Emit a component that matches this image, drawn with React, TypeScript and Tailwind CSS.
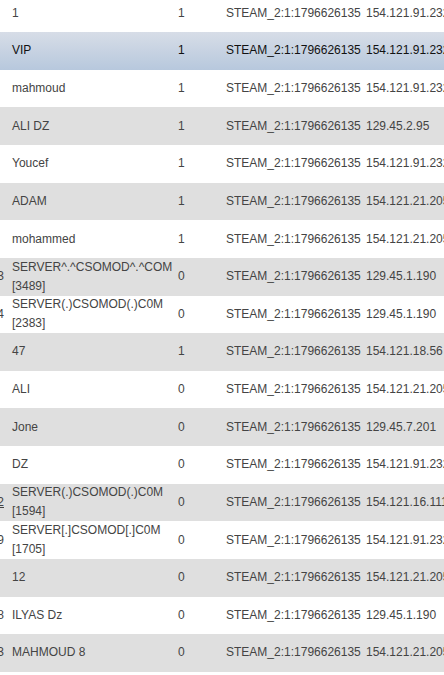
import React from "react";

type Row = { id: string; name: string[]; score: string; steam: string; ip: string; vip?: boolean; u?: boolean };

const rows: Row[] = [
  { id: "", name: ["1"], score: "1", steam: "STEAM_2:1:1796626135", ip: "154.121.91.232" },
  { id: "", name: ["VIP"], score: "1", steam: "STEAM_2:1:1796626135", ip: "154.121.91.232", vip: true },
  { id: "", name: ["mahmoud"], score: "1", steam: "STEAM_2:1:1796626135", ip: "154.121.91.232" },
  { id: "", name: ["ALI DZ"], score: "1", steam: "STEAM_2:1:1796626135", ip: "129.45.2.95" },
  { id: "", name: ["Youcef"], score: "1", steam: "STEAM_2:1:1796626135", ip: "154.121.91.232" },
  { id: "", name: ["ADAM"], score: "1", steam: "STEAM_2:1:1796626135", ip: "154.121.21.205" },
  { id: "", name: ["mohammed"], score: "1", steam: "STEAM_2:1:1796626135", ip: "154.121.21.205" },
  { id: "3", name: ["SERVER^.^CSOMOD^.^COM", "[3489]"], score: "0", steam: "STEAM_2:1:1796626135", ip: "129.45.1.190" },
  { id: "4", name: ["SERVER(.)CSOMOD(.)C0M", "[2383]"], score: "0", steam: "STEAM_2:1:1796626135", ip: "129.45.1.190" },
  { id: "", name: ["47"], score: "1", steam: "STEAM_2:1:1796626135", ip: "154.121.18.56" },
  { id: "", name: ["ALI"], score: "0", steam: "STEAM_2:1:1796626135", ip: "154.121.21.205" },
  { id: "", name: ["Jone"], score: "0", steam: "STEAM_2:1:1796626135", ip: "129.45.7.201" },
  { id: "", name: ["DZ"], score: "0", steam: "STEAM_2:1:1796626135", ip: "154.121.91.232" },
  { id: "2", name: ["SERVER(.)CSOMOD(.)C0M", "[1594]"], score: "0", steam: "STEAM_2:1:1796626135", ip: "154.121.16.111", u: true },
  { id: "9", name: ["SERVER[.]CSOMOD[.]C0M", "[1705]"], score: "0", steam: "STEAM_2:1:1796626135", ip: "154.121.91.232" },
  { id: "", name: ["12"], score: "0", steam: "STEAM_2:1:1796626135", ip: "154.121.21.205" },
  { id: "8", name: ["ILYAS Dz"], score: "0", steam: "STEAM_2:1:1796626135", ip: "129.45.1.190" },
  { id: "3", name: ["MAHMOUD 8"], score: "0", steam: "STEAM_2:1:1796626135", ip: "154.121.21.205" },
];

export default function App() {
  return (
    <div
      className="w-[444px] h-[675px] overflow-hidden bg-white text-[12px] leading-[19px] text-[#444]"
      style={{ fontFamily: '"Liberation Sans", Arial, sans-serif' }}
    >
      <div className="mt-[-5.5px]">
        {rows.map((r, i) => (
          <div
            key={i}
            className={
              "flex items-center h-[37.64px] whitespace-nowrap " +
              (r.vip
                ? "bg-gradient-to-b from-[#d7dde7] to-[#b7c8dd] text-[#111]"
                : i % 2 === 1
                ? "bg-[#dfdfdf]"
                : "bg-white")
            }
          >
            <div className="w-[4px] shrink-0 flex justify-end">
              <span className={r.u ? "underline" : ""}>{r.id}</span>
            </div>
            <div className="w-[174px] shrink-0 pl-[8px]">
              {r.name.map((n, k) => (
                <div key={k}>{n}</div>
              ))}
            </div>
            <div className="w-[48px] shrink-0">{r.score}</div>
            <div className="w-[140px] shrink-0">{r.steam}</div>
            <div className="shrink-0">{r.ip}</div>
          </div>
        ))}
      </div>
    </div>
  );
}
